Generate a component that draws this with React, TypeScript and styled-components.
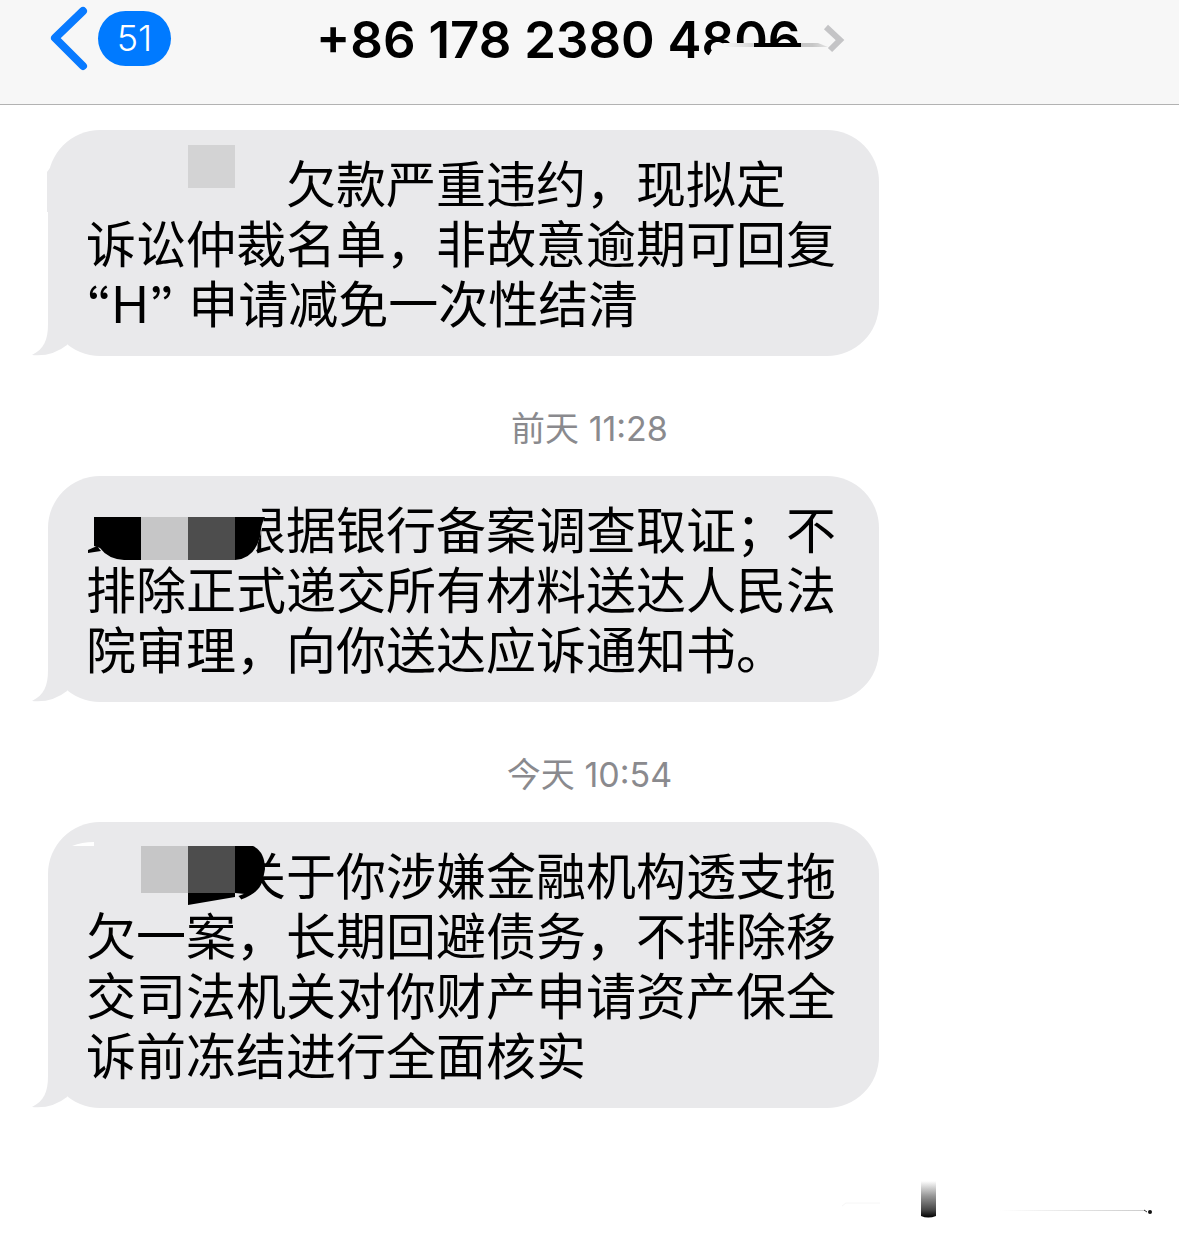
import React from 'react';
import styled, { createGlobalStyle } from 'styled-components'

export type MessageType = {
    id: number
    time?: string
    lines: string[]
    hidden: number
    mask: React.ReactNode
}

const messages: MessageType[] = [
    {
        id: 1,
        hidden: 4,
        lines: ['欠款严重违约，现拟定', '诉讼仲裁名单，非故意逾期可回复', '“H” 申请减免一次性结清'],
        mask: (
            <>
                <path d='M-1 42 L2 38 V82 H-1 Z' fill='#e9e9eb'/>
                <rect x='140' y='15' width='47' height='43' fill='#d3d3d4'/>
            </>
        ),
    },
    {
        id: 2,
        time: '前天 11:28',
        hidden: 3,
        lines: ['根据银行备案调查取证；不', '排除正式递交所有材料送达人民法', '院审理，向你送达应诉通知书。'],
        mask: (
            <>
                <path d='M180 24 H212 L216 42 Q213 60 208 72 L204 86 H180 Z' fill='#e9e9eb'/>
                <path d='M40 74 L49 70 L53 75 L40 77 Z' fill='#000'/>
                <path d='M46 41 H93 V84 H76 Q60 83 52 72 L46 70 Z' fill='#000'/>
                <rect x='93' y='41' width='47' height='43' fill='#c6c6c7'/>
                <rect x='140' y='41' width='47' height='43' fill='#4d4d4d'/>
                <path d='M187 41 H217 Q213 48 212 61 Q206 83 187 84 Z' fill='#000'/>
            </>
        ),
    },
    {
        id: 3,
        time: '今天 10:54',
        hidden: 3,
        lines: ['关于你涉嫌金融机构透支拖', '欠一案，长期回避债务，不排除移', '交司法机关对你财产申请资产保全', '诉前冻结进行全面核实'],
        mask: (
            <>
                <path d='M24 24 Q34 20 46 20 V24 Z' fill='#fff'/>
                <rect x='93' y='24' width='47' height='47' fill='#c6c6c7'/>
                <path d='M140 71 H187 V75 L140 83 Z' fill='#000'/>
                <rect x='140' y='24' width='47' height='47' fill='#4d4d4d'/>
                <path d='M187 24 H205 Q217 30 217 47 Q215 66 197 72 L187 71 Z' fill='#000'/>
            </>
        ),
    },
]

export default function App() {
    return (
        <Page>
            <GlobalStyle/>
            <Header>
                <BackButton type='button' aria-label='Back, 51 unread'>
                    <BackIcon viewBox='0 0 40 66' aria-hidden='true'>
                        <path d='M34 6 L6 33 L34 61' fill='none' stroke='#087aff' strokeWidth='8' strokeLinecap='round' strokeLinejoin='round'/>
                    </BackIcon>
                    <Badge>51</Badge>
                </BackButton>
                <ContactButton type='button'>
                    <Title>
                        +86 178 2380 4806
                        <TitleMask viewBox='0 0 130 40' aria-hidden='true'>
                            <defs>
                                <linearGradient id='smear' x1='0' x2='1'>
                                    <stop offset='0' stopColor='#f7f7f7'/>
                                    <stop offset='0.4' stopColor='#c6c6c6'/>
                                    <stop offset='0.85' stopColor='#c6c6c6'/>
                                    <stop offset='1' stopColor='#e4e4e4'/>
                                </linearGradient>
                            </defs>
                            <path d='M4 17 L9 16 Q14 6 24 4 H104 V40 H4 Z' fill='#f7f7f7'/>
                            <path d='M24 4 H118 L128 8 H24 Z' fill='url(#smear)'/>
                            <path d='M54 4 H101 V8 H54 Z' fill='#000'/>
                        </TitleMask>
                    </Title>
                    <NextIcon viewBox='0 0 24 32' aria-hidden='true'>
                        <path d='M4 3 L18 16 L8 26' fill='none' stroke='#c4c4c6' strokeWidth='6'/>
                    </NextIcon>
                </ContactButton>
            </Header>
            <Messages>
                {messages.map(m => (
                    <React.Fragment key={m.id}>
                        {m.time && <Time>{m.time}</Time>}
                        <Bubble>
                            <Tail viewBox='0 0 40 60' aria-hidden='true'>
                                <path d='M16 0 V28 C16 44 12 53 0 59 Q20 61 35 49 V0 Z' fill='#e9e9eb'/>
                            </Tail>
                            {m.lines.map((line, i) => (
                                <Line key={line} $indent={i === 0 ? m.hidden : 0}>{line}</Line>
                            ))}
                            <Mask viewBox='0 0 240 100' aria-hidden='true'>{m.mask}</Mask>
                        </Bubble>
                    </React.Fragment>
                ))}
            </Messages>
            <Footer>
                <Scribble viewBox='0 0 312 40' aria-hidden='true'>
                    <defs>
                        <linearGradient id='block' x1='0' x2='0' y1='0' y2='1'>
                            <stop offset='0' stopColor='#fff'/>
                            <stop offset='0.4' stopColor='#999'/>
                            <stop offset='0.8' stopColor='#444'/>
                            <stop offset='1' stopColor='#000'/>
                        </linearGradient>
                        <linearGradient id='line' x1='0' x2='1'>
                            <stop offset='0' stopColor='#fff'/>
                            <stop offset='1' stopColor='#ccc'/>
                        </linearGradient>
                    </defs>
                    <path d='M2 26 L6 23 H40' fill='none' stroke='#f6f6f6'/>
                    <path d='M81 1 H96 V36 Q88 39 81 36 Z' fill='url(#block)'/>
                    <rect x='160' y='30' width='145' height='1' fill='url(#line)'/>
                    <path d='M304 30 L307 32' stroke='#333'/>
                    <circle cx='310' cy='32' r='2' fill='#111'/>
                </Scribble>
            </Footer>
        </Page>
    )
}

const GlobalStyle = createGlobalStyle`
    body {
        margin: 0;
        background: #fff;
    }
    button {
        border: 0;
        padding: 0;
        background: none;
        font-family: inherit;
    }
`

const Page = styled.div`
    font-family: Inter, "Noto Sans CJK SC", sans-serif;
    color: #000;
    overflow: hidden;
`

const Header = styled.header`
    display: flex;
    align-items: flex-start;
    height: 104px;
    padding-left: 49px;
    background: #f7f7f7;
    border-bottom: 1px solid #b2b2b2;
`

const BackButton = styled.button`
    display: flex;
    align-items: center;
    gap: 9px;
    margin-top: 5px;
`

const BackIcon = styled.svg`
    width: 40px;
    height: 66px;
`

const Badge = styled.span`
    width: 73px;
    border-radius: 28px;
    background: #007aff;
    color: #fff;
    font-size: 36px;
    font-weight: 300;
    line-height: 55px;
`

const ContactButton = styled.button`
    display: flex;
    align-items: center;
    gap: 22px;
    margin: 10px auto 0 145px;
`

const Title = styled.span`
    position: relative;
    color: #000;
    font-size: 51px;
    font-weight: 600;
    line-height: 60px;
    white-space: nowrap;
`

const TitleMask = styled.svg`
    position: absolute;
    top: 29px;
    right: -30px;
    width: 130px;
    height: 40px;
`

const NextIcon = styled.svg`
    width: 24px;
    height: 32px;
`

const Messages = styled.main`
    display: flex;
    flex-direction: column;
    align-items: flex-start;
    padding: 25px 48px 0;
`

const Time = styled.time`
    align-self: center;
    padding: 49px 0 23px;
    color: #8a8a8e;
    font-size: 34px;
    line-height: 48px;
`

const Bubble = styled.div`
    position: relative;
    box-sizing: border-box;
    width: 77%;
    max-width: 831px;
    padding: 25px 38px 21px;
    border-radius: 52px;
    background: #e9e9eb;
`

const Tail = styled.svg`
    position: absolute;
    left: -16px;
    bottom: 0;
    width: 40px;
    height: 60px;
`

const Line = styled.p<{ $indent: number }>`
    margin: 0;
    padding-left: ${({ $indent }) => $indent}em;
    font-size: 50px;
    font-weight: 400;
    font-feature-settings: "ss03";
    line-height: 60px;
    white-space: nowrap;
`

const Mask = styled.svg`
    position: absolute;
    top: 0;
    left: 0;
    width: 240px;
    height: 100px;
    overflow: visible;
`

const Footer = styled.footer`
    display: flex;
    justify-content: flex-end;
    padding: 72px 27px 22px;
`

const Scribble = styled.svg`
    width: 312px;
    height: 40px;
`
